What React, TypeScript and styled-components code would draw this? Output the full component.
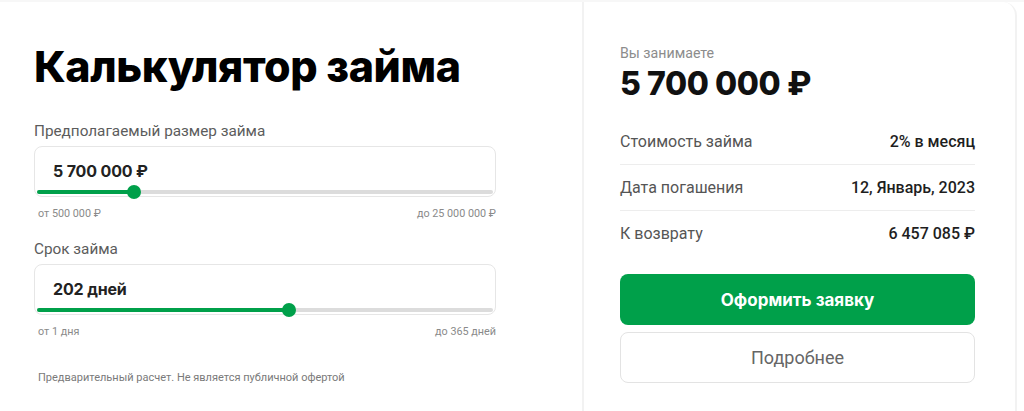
import React from 'react';
import styled, { createGlobalStyle } from 'styled-components';

const GREEN = '#00a04a';

const GlobalStyle = createGlobalStyle`
  html, body {
    margin: 0;
    padding: 0;
    background: #ffffff;
    font-family: Roboto, "Liberation Sans", sans-serif;
    color: #222;
  }
  * { box-sizing: border-box; }
`;

const Page = styled.div`
  display: flex;
  align-items: flex-start;
  height: 411px;
  overflow: hidden;
  border-top: 2px solid #f7f7f7;
`;

const Calculator = styled.section`
  width: 462px;
  margin-left: 34px;
  padding-top: 38px;
`;

const Title = styled.h1`
  margin: 0;
  font-family: Inter, "Noto Sans", sans-serif;
  font-weight: 800;
  font-size: 43px;
  line-height: 52px;
  letter-spacing: -0.4px;
  color: #000;
`;

const Field = styled.div`
  margin-top: ${({ $first }: { $first?: boolean }) => ($first ? '30px' : '20px')};
`;

const Label = styled.div`
  font-size: 15.3px;
  line-height: 18px;
  color: #5c5c5c;
  margin-bottom: 6px;
`;

const InputBox = styled.div`
  position: relative;
  height: 51px;
  border: 1px solid #e6e6e6;
  border-radius: 8px;
  padding: 14px 18px 0;
`;

const Value = styled.div`
  font-family: Inter, "Noto Sans", sans-serif;
  font-weight: 700;
  font-size: 16px;
  line-height: 20px;
  letter-spacing: -0.15px;
  color: #222;
`;

const Track = styled.div`
  position: absolute;
  left: 2px;
  right: 2px;
  bottom: 2px;
  height: 4px;
  border-radius: 2px;
  background: #dcdcdc;
`;

const Fill = styled.div`
  height: 100%;
  border-radius: 2px;
  background: ${GREEN};
`;

const Thumb = styled.div`
  position: absolute;
  top: 50%;
  width: 14px;
  height: 14px;
  margin: -7px 0 0 -7px;
  border-radius: 50%;
  background: ${GREEN};
`;

const Range = styled.div`
  display: flex;
  justify-content: space-between;
  padding: 0 0 0 4px;
  margin-top: 11px;
  font-size: 10.8px;
  line-height: 12px;
  color: #8a8a8a;
`;

const Disclaimer = styled.p`
  margin: 34px 0 0 4px;
  font-size: 11px;
  line-height: 12px;
  color: #7a7a7a;
`;

const Card = styled.aside`
  width: 435px;
  margin-left: 86px;
  height: 430px;
  border: 2px solid #f2f2f2;
  border-top: none;
  border-radius: 0 14px 0 0;
  padding: 43px 40px 0 36px;
  background: #fff;
`;

const Caption = styled.div`
  font-size: 14.2px;
  line-height: 16px;
  color: #8c8c8c;
`;

const Amount = styled.div`
  font-family: Inter, "Noto Sans", sans-serif;
  font-weight: 800;
  font-size: 32px;
  line-height: 38px;
  letter-spacing: -0.4px;
  margin-top: 4px;
  color: #111;
`;

const Rows = styled.div`
  margin-top: 16px;
`;

const Row = styled.div`
  display: flex;
  justify-content: space-between;
  align-items: center;
  height: 46px;
  border-bottom: 1px solid ${({ $last }: { $last?: boolean }) => ($last ? 'transparent' : '#ededed')};
`;

const RowLabel = styled.span`
  font-size: 16px;
  color: #555;
`;

const RowValue = styled.span`
  font-size: 16px;
  font-weight: 500;
  color: #1e1e1e;
`;

const Button = styled.button<{ $primary?: boolean }>`
  display: block;
  width: 100%;
  height: 51px;
  border-radius: 8px;
  cursor: pointer;
  ${({ $primary }) =>
    $primary
      ? `
    margin-top: 17px;
    background: ${GREEN};
    border: none;
    color: #fff;
    font-family: Inter, "Noto Sans", sans-serif;
    font-weight: 700;
    font-size: 17px;
  `
      : `
    margin-top: 7px;
    background: #fff;
    border: 1px solid #e3e3e3;
    color: #666;
    font-family: Roboto, "Liberation Sans", sans-serif;
    font-weight: 400;
    font-size: 18px;
  `}
`;

type SliderField = {
  label: string;
  value: string;
  min: number;
  max: number;
  current: number;
  minText: string;
  maxText: string;
};

const fields: SliderField[] = [
  {
    label: 'Предполагаемый размер займа',
    value: '5 700 000 ₽',
    min: 500000,
    max: 25000000,
    current: 5700000,
    minText: 'от 500 000 ₽',
    maxText: 'до 25 000 000 ₽',
  },
  {
    label: 'Срок займа',
    value: '202 дней',
    min: 1,
    max: 365,
    current: 202,
    minText: 'от 1 дня',
    maxText: 'до 365 дней',
  },
];

const summary = [
  { label: 'Стоимость займа', value: '2% в месяц' },
  { label: 'Дата погашения', value: '12, Январь, 2023' },
  { label: 'К возврату', value: '6 457 085 ₽' },
];

const App = () => (
  <>
    <GlobalStyle />
    <Page>
      <Calculator>
        <Title>Калькулятор займа</Title>
        {fields.map((f, i) => {
          const pct = ((f.current - f.min) / (f.max - f.min)) * 100;
          return (
            <Field key={f.label} $first={i === 0}>
              <Label>{f.label}</Label>
              <InputBox>
                <Value>{f.value}</Value>
                <Track>
                  <Fill style={{ width: `${pct}%` }} />
                  <Thumb style={{ left: `${pct}%` }} />
                </Track>
              </InputBox>
              <Range>
                <span>{f.minText}</span>
                <span>{f.maxText}</span>
              </Range>
            </Field>
          );
        })}
        <Disclaimer>Предварительный расчет. Не является публичной офертой</Disclaimer>
      </Calculator>
      <Card>
        <Caption>Вы занимаете</Caption>
        <Amount>5 700 000 ₽</Amount>
        <Rows>
          {summary.map((r, i) => (
            <Row key={r.label} $last={i === summary.length - 1}>
              <RowLabel>{r.label}</RowLabel>
              <RowValue>{r.value}</RowValue>
            </Row>
          ))}
        </Rows>
        <Button $primary>Оформить заявку</Button>
        <Button>Подробнее</Button>
      </Card>
    </Page>
  </>
);

export default App;
